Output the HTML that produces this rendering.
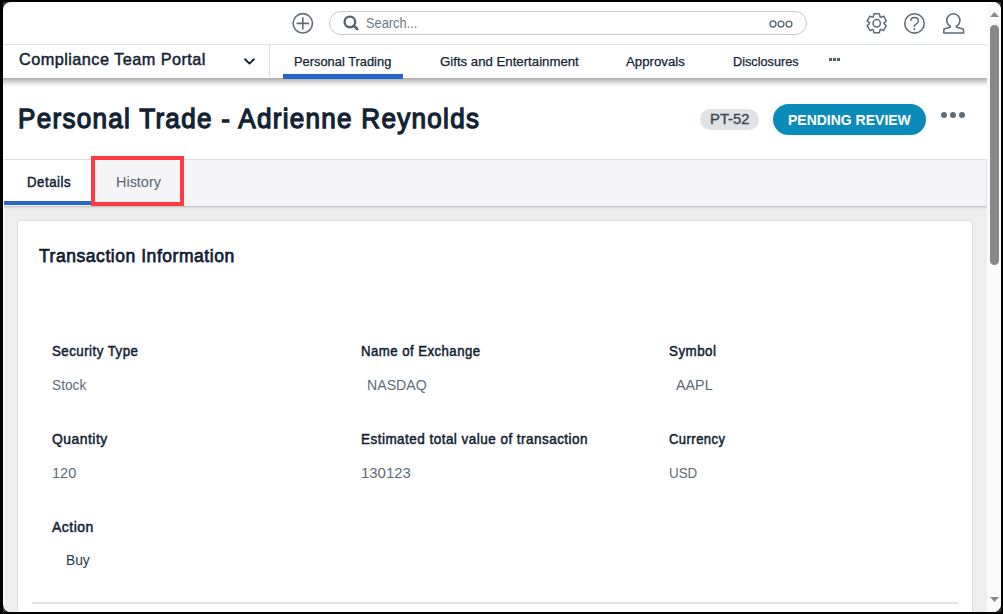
<!DOCTYPE html>
<html><head><meta charset="utf-8">
<style>
*{margin:0;padding:0;box-sizing:border-box;}
html,body{width:1003px;height:614px;overflow:hidden;background:#000;font-family:"Liberation Sans",sans-serif;}
#win{position:absolute;left:3px;top:2px;width:998px;height:610px;background:#fff;border-radius:8px;overflow:hidden;}
.a{position:absolute;}
.t{position:absolute;white-space:nowrap;transform-origin:0 0;}
</style></head>
<body>
<div class="a" style="left:3px;top:2px;width:998px;height:610px;background:#3a3a3a;"></div>
<div id="win">
  <!-- everything inside uses page coords offset by (-3,-2) -->
  <div class="a" style="left:-3px;top:-2px;width:1003px;height:614px;">
    <!-- top bar line -->
    <div class="a" style="left:0;top:44px;width:987px;height:1px;background:#dde3e7;"></div>
    <!-- nav shadow -->
    <div class="a" style="left:0;top:78px;width:987px;height:9px;background:linear-gradient(#a9a9a9,#bdbdbd 18%,#d2d2d2 38%,#e9e9e9 62%,#f9f9f9 85%,#fff);"></div>
    <!-- vertical divider -->
    <div class="a" style="left:269px;top:45px;width:1px;height:32px;background:#dde3e7;"></div>
    <!-- active nav underline -->
    <div class="a" style="left:283px;top:74px;width:120px;height:5px;background:#2766c8;"></div>
    <!-- nav more dots -->
    <div class="a" style="left:829px;top:58px;width:3px;height:3px;background:#52616e;box-shadow:4px 0 0 #52616e,8px 0 0 #52616e;"></div>

    <!-- search box -->
    <div class="a" style="left:329px;top:11px;width:478px;height:24px;border:1px solid #c6c8ca;border-radius:12px;"></div>

    <!-- PT-52 badge -->
    <div class="a" style="left:700px;top:109px;width:59px;height:21px;background:#e0e3e6;border-radius:11px;"></div>
    <!-- pending review -->
    <div class="a" style="left:773px;top:104px;width:153px;height:31px;background:#0b8bb9;border-radius:16px;"></div>
    <!-- more dots -->
    <div class="a" style="left:941px;top:112px;width:6px;height:6px;border-radius:50%;background:#5e6d79;box-shadow:9px 0 0 #5e6d79,18px 0 0 #5e6d79;"></div>

    <!-- tab bar -->
    <div class="a" style="left:4px;top:159px;width:983px;height:48px;background:#f5f5f8;border-top:1px solid #d8dee2;border-bottom:1px solid #c6c6c6;border-right:1px solid #dfe3e6;"></div>
    <!-- content gray -->
    <div class="a" style="left:4px;top:207px;width:983px;height:410px;background:#eeeeee;"></div>
    <div class="a" style="left:4px;top:207px;width:983px;height:3px;background:linear-gradient(#d9d9d9,#ececec 70%,#eeeeee);"></div>
    <!-- details tab white -->
    <div class="a" style="left:4px;top:160px;width:87px;height:41px;background:#fff;"></div>
    <!-- details underline -->
    <div class="a" style="left:4px;top:201px;width:88px;height:4px;background:#2766c8;"></div>
    <!-- red box -->
    <div class="a" style="left:91px;top:156px;width:93px;height:50px;border:4px solid #fc3a3f;"></div>

    <!-- card -->
    <div class="a" style="left:17px;top:220px;width:956px;height:420px;background:#fff;border:1px solid #dcdfe1;border-radius:3px;box-shadow:0 0 1px rgba(0,0,0,0.08);"></div>
    <!-- card bottom line -->
    <div class="a" style="left:32px;top:602px;width:926px;height:2px;background:#e4e4e4;"></div>

    <!-- scrollbar -->
    <div class="a" style="left:987px;top:0;width:14px;height:614px;background:#fafafa;"></div>
    <div class="a" style="left:990px;top:25px;width:9px;height:240px;background:#888;border-radius:4.5px;"></div>
    <svg class="a" style="left:987px;top:0;" width="14" height="614">
      <polygon points="3,17 12,17 7.5,12" fill="#888"/>
      <polygon points="3,597 12,597 7.5,602" fill="#888"/>
    </svg>

    <!-- icons -->
    <svg class="a" style="left:0;top:0;" width="1003" height="90">
      <g fill="none" stroke="#5e6d79" stroke-width="1.6">
        <circle cx="302.8" cy="23.3" r="9.7"/>
        <line x1="302.8" y1="17.2" x2="302.8" y2="29.6"/>
        <line x1="296.6" y1="23.4" x2="309" y2="23.4"/>
      </g>
      <g fill="none" stroke="#56656f">
        <circle cx="349.9" cy="21.9" r="5.3" stroke-width="2.4"/>
        <line x1="353.8" y1="25.8" x2="357.3" y2="29.1" stroke-width="2.6" stroke-linecap="round"/>
      </g>
      <g fill="none" stroke="#5e6d79" stroke-width="1.45">
        <circle cx="773" cy="24" r="2.95"/>
        <circle cx="781" cy="24" r="2.9"/>
        <circle cx="789" cy="24" r="2.9"/>
      </g>
      <!-- gear -->
      <g fill="none" stroke="#5e6d79" stroke-width="1.5" stroke-linejoin="round">
        <path d="M873.39 16.80 L873.97 13.78 L879.43 13.78 L880.01 16.80 L880.68 17.18 L883.58 16.18 L886.31 20.90 L883.99 22.92 L883.99 23.68 L886.31 25.70 L883.58 30.42 L880.68 29.42 L880.01 29.80 L879.43 32.82 L873.97 32.82 L873.39 29.80 L872.72 29.42 L869.82 30.42 L867.09 25.70 L869.41 23.68 L869.41 22.92 L867.09 20.90 L869.82 16.18 L872.72 17.18 Z"/>
        <circle cx="876.7" cy="23.3" r="3.7"/>
      </g>
      <!-- help -->
      <g fill="none" stroke="#5e6d79" stroke-width="1.6">
        <circle cx="914.5" cy="23.4" r="9.7"/>
        <path d="M910.7 20.9 C910.8 18.9 912.4 17.6 914.5 17.6 C916.8 17.6 918.4 19 918.4 21 C918.4 23 916.4 23.7 915 25 C914.5 25.5 914.3 26.1 914.3 26.9" stroke-width="1.5"/>
      </g>
      <circle cx="914.3" cy="29" r="1.05" fill="#5e6d79"/>
      <!-- user -->
      <g fill="none" stroke="#5e6d79" stroke-width="1.6" stroke-linejoin="round">
        <path d="M950.4 26.3 A6.6 6.6 0 1 1 956.3 26.3 L956.5 27.2 L963.3 29 L963.6 33 L943.7 33 L944 29 L950.2 27.2 Z"/>
      </g>
      <!-- chevron -->
      <polyline points="245.1,59.3 249.5,63.6 253.9,59.3" fill="none" stroke="#122233" stroke-width="1.9" stroke-linecap="round" stroke-linejoin="round"/>
    </svg>

<div class="t" style="left:365.60px;top:15.25px;font-size:14.53px;line-height:16.24px;color:#6d7a86;transform:scaleX(0.8836);">Search...</div>
<div class="t" style="left:18.70px;top:51.00px;font-size:16.57px;line-height:18.51px;color:#122233;transform:scaleX(0.9836);-webkit-text-stroke:0.45px #122233;letter-spacing:0.45px;">Compliance Team Portal</div>
<div class="t" style="left:294.40px;top:53.67px;font-size:13.52px;line-height:15.10px;color:#122233;transform:scaleX(0.9521);-webkit-text-stroke:0.25px #122233;">Personal Trading</div>
<div class="t" style="left:439.50px;top:53.67px;font-size:13.52px;line-height:15.10px;color:#122233;transform:scaleX(0.9774);-webkit-text-stroke:0.25px #122233;">Gifts and Entertainment</div>
<div class="t" style="left:625.90px;top:53.67px;font-size:13.52px;line-height:15.10px;color:#122233;transform:scaleX(0.9798);-webkit-text-stroke:0.25px #122233;">Approvals</div>
<div class="t" style="left:732.70px;top:53.67px;font-size:13.52px;line-height:15.10px;color:#122233;transform:scaleX(0.9390);-webkit-text-stroke:0.25px #122233;">Disclosures</div>
<div class="t" style="left:18.00px;top:103.45px;font-size:28.34px;line-height:31.66px;color:#122233;transform:scaleX(0.9196);-webkit-text-stroke:1.3px #122233;letter-spacing:1.4px;">Personal Trade - Adrienne Reynolds</div>
<div class="t" style="left:709.70px;top:111.35px;font-size:14.53px;line-height:16.24px;color:#3c4853;transform:scaleX(1.0211);-webkit-text-stroke:0.35px #3c4853;">PT-52</div>
<div class="t" style="left:788.30px;top:110.79px;font-size:15.26px;line-height:17.05px;font-weight:700;color:#ffffff;transform:scaleX(0.9173);">PENDING REVIEW</div>
<div class="t" style="left:26.60px;top:174.87px;font-size:13.95px;line-height:15.59px;color:#122233;transform:scaleX(0.9434);-webkit-text-stroke:0.5px #122233;letter-spacing:0.6px;">Details</div>
<div class="t" style="left:115.80px;top:173.75px;font-size:14.53px;line-height:16.24px;color:#56646f;transform:scaleX(0.9950);">History</div>
<div class="t" style="left:39.20px;top:244.80px;font-size:18.90px;line-height:21.11px;color:#122233;transform:scaleX(0.9253);-webkit-text-stroke:0.75px #122233;letter-spacing:0.6px;">Transaction Information</div>
<div class="t" style="left:52.00px;top:342.85px;font-size:14.53px;line-height:16.24px;color:#122233;transform:scaleX(0.9184);-webkit-text-stroke:0.5px #122233;letter-spacing:0.5px;">Security Type</div>
<div class="t" style="left:52.00px;top:376.55px;font-size:14.53px;line-height:16.24px;color:#5e6b77;transform:scaleX(0.9436);">Stock</div>
<div class="t" style="left:360.70px;top:342.85px;font-size:14.53px;line-height:16.24px;color:#122233;transform:scaleX(0.9094);-webkit-text-stroke:0.5px #122233;letter-spacing:0.5px;">Name of Exchange</div>
<div class="t" style="left:367.10px;top:376.55px;font-size:14.53px;line-height:16.24px;color:#5e6b77;transform:scaleX(0.9742);">NASDAQ</div>
<div class="t" style="left:669.40px;top:342.85px;font-size:14.53px;line-height:16.24px;color:#122233;transform:scaleX(0.9229);-webkit-text-stroke:0.5px #122233;letter-spacing:0.5px;">Symbol</div>
<div class="t" style="left:676.20px;top:376.55px;font-size:14.53px;line-height:16.24px;color:#5e6b77;transform:scaleX(0.9874);">AAPL</div>
<div class="t" style="left:52.00px;top:430.65px;font-size:14.53px;line-height:16.24px;color:#122233;transform:scaleX(0.9599);-webkit-text-stroke:0.5px #122233;letter-spacing:0.5px;">Quantity</div>
<div class="t" style="left:52.40px;top:465.45px;font-size:14.53px;line-height:16.24px;color:#5e6b77;transform:scaleX(1.0020);">120</div>
<div class="t" style="left:360.70px;top:430.65px;font-size:14.53px;line-height:16.24px;color:#122233;transform:scaleX(0.9307);-webkit-text-stroke:0.5px #122233;letter-spacing:0.5px;">Estimated total value of transaction</div>
<div class="t" style="left:360.70px;top:465.45px;font-size:14.53px;line-height:16.24px;color:#5e6b77;transform:scaleX(1.0288);">130123</div>
<div class="t" style="left:669.40px;top:430.65px;font-size:14.53px;line-height:16.24px;color:#122233;transform:scaleX(0.8989);-webkit-text-stroke:0.5px #122233;letter-spacing:0.5px;">Currency</div>
<div class="t" style="left:669.40px;top:465.45px;font-size:14.53px;line-height:16.24px;color:#5e6b77;transform:scaleX(0.9222);">USD</div>
<div class="t" style="left:51.90px;top:518.85px;font-size:14.53px;line-height:16.24px;color:#122233;transform:scaleX(0.9655);-webkit-text-stroke:0.5px #122233;letter-spacing:0.5px;">Action</div>
<div class="t" style="left:66.20px;top:551.85px;font-size:14.53px;line-height:16.24px;color:#24384c;transform:scaleX(0.9502);">Buy</div>
  </div>
</div>
</body></html>
